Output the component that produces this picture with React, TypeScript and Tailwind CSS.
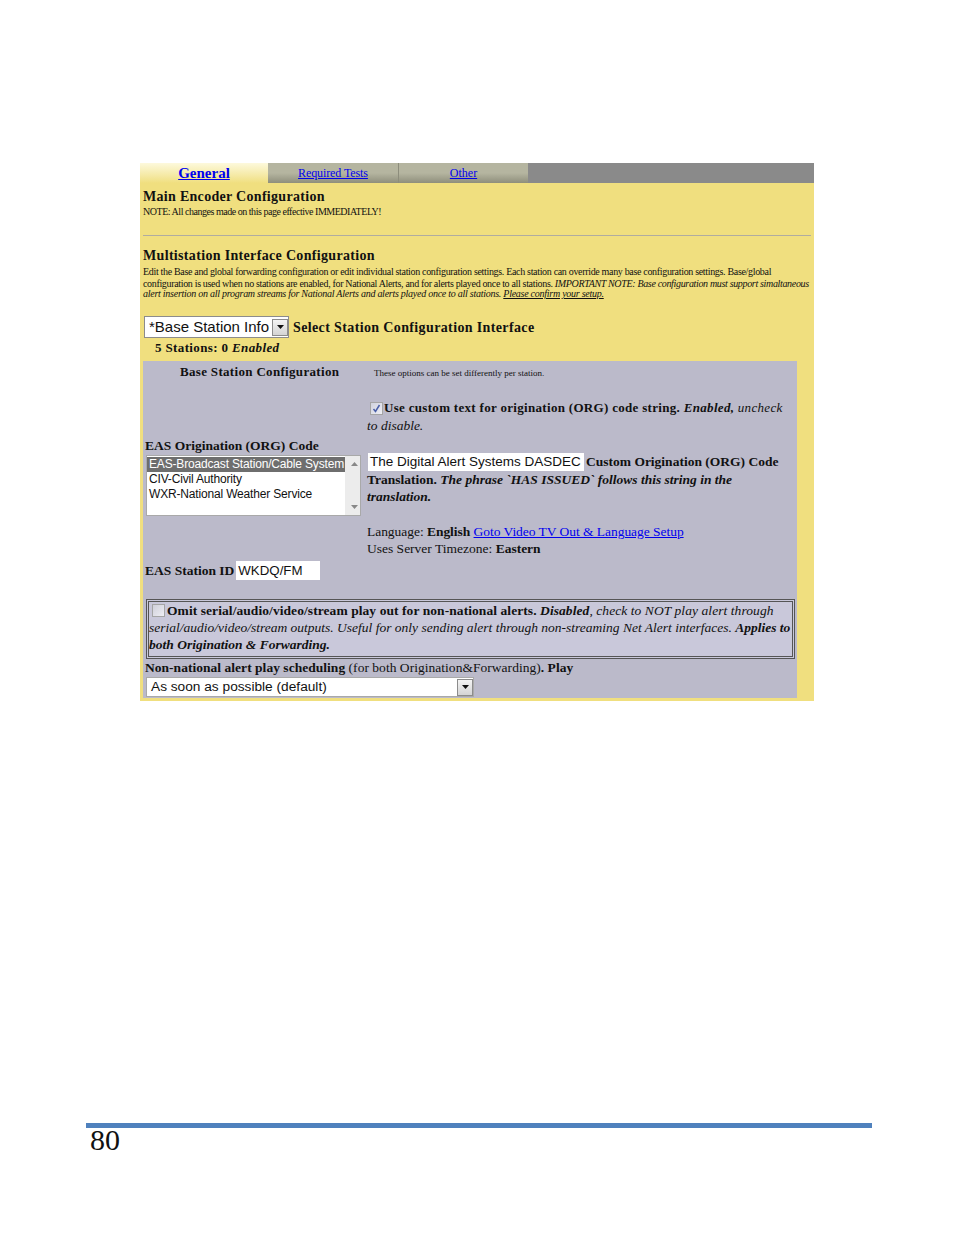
function Arrow() {
  return (
    <span className="flex h-[17px] w-[16px] items-center justify-center border border-[#8c8c8c] bg-gradient-to-b from-[#f4f4f4] to-[#d4d4d4]">
      <svg width="7" height="4" viewBox="0 0 7 4">
        <path d="M0 0h7L3.500 4z" fill="#111" />
      </svg>
    </span>
  );
}

export default function App() {
  return (
    <div className="h-[1235px] w-[954px] overflow-hidden bg-white pt-[163px] font-['Liberation_Serif',serif] text-[#111]">
      <div className="ml-[140px] h-[538px] w-[674px] bg-[#f0df7f]">
        {/* tabs */}
        <div className="flex h-[20px] bg-[#8a8a8a]">
          <div className="w-[128px] bg-gradient-to-b from-[#fdf9dc] to-[#f0df7f] pt-px text-center text-[15px] leading-[18px] font-bold">
            <a className="text-[#0000ee] underline">General</a>
          </div>
          <div className="w-[131px] border-r border-[#8d8d7c] bg-gradient-to-b from-[#b5b5a0] via-[#b5b5a0] to-[#8f8f7c] pt-[2px] text-center text-[12px] leading-[16px] tracking-[-0.1px]">
            <a className="text-[#0000ee] underline">Required Tests</a>
          </div>
          <div className="w-[129px] bg-gradient-to-b from-[#b5b5a0] via-[#b5b5a0] to-[#8f8f7c] pt-[2px] text-center text-[12px] leading-[16px]">
            <a className="text-[#0000ee] underline">Other</a>
          </div>
        </div>

        <div className="pl-[3px]">
          <h1 className="mt-[5px] text-[14px] leading-[18px] font-bold tracking-[0.3px]">Main Encoder Configuration</h1>
          <p className="text-[10px] leading-[12px] tracking-[-0.47px]">NOTE: All changes made on this page effective IMMEDIATELY!</p>
          <div className="mt-[17px] mr-[3px] h-px bg-[#b0aca0]" />
          <h1 className="mt-[11px] text-[14px] leading-[18px] font-bold tracking-[0.33px]">Multistation Interface Configuration</h1>
          <div className="mt-[1px] text-[10px] whitespace-nowrap">
            <p className="leading-[12px] tracking-[-0.325px]">Edit the Base and global forwarding configuration or edit individual station configuration settings. Each station can override many base configuration settings. Base/global</p>
            <p className="leading-[11px] tracking-[-0.335px]">
              configuration is used when no stations are enabled, for National Alerts, and for alerts played once to all stations. <i>IMPORTANT NOTE: Base configuration must support simaltaneous</i>
            </p>
            <p className="leading-[10px] tracking-[-0.26px] italic">
              alert insertion on all program streams for National Alerts and alerts played once to all stations. <u>Please confirm your setup.</u>
            </p>
          </div>

          <div className="mt-[17px] flex items-center">
            <div className="ml-px flex h-[22px] w-[145px] items-center justify-between border border-[#8c8c8c] bg-white pl-[4px] font-['Liberation_Sans',sans-serif] text-[15px] leading-[16px]">
              <span>*Base Station Info</span>
              <Arrow />
            </div>
            <span className="ml-[4px] pt-px text-[14px] leading-[16px] font-bold tracking-[0.37px]">Select Station Configuration Interface</span>
          </div>
          <p className="mt-[2px] pl-[12px] text-[13px] leading-[16px] font-bold tracking-[0.37px]">
            5 Stations: 0 <i>Enabled</i>
          </p>

          {/* grey panel */}
          <div className="mt-[5px] h-[337px] w-[654px] bg-[#bbbaca]">
            <div className="flex h-[21px] items-start">
              <span className="mt-[3px] ml-[37px] w-[194px] text-[13px] leading-[16px] font-bold tracking-[0.32px]">Base Station Configuration</span>
              <span className="mt-[4px] text-[9px] leading-[16px]">These options can be set differently per station.</span>
            </div>

            <div className="flex">
              <div className="w-[224px] pl-[2px]">
                <p className="mt-[56px] text-[13.5px] leading-[16px] font-bold">EAS Origination (ORG) Code</p>
                <div className="mt-[1px] ml-[1px] flex h-[61px] w-[215px] border border-[#a9a9a9] bg-white font-['Liberation_Sans',sans-serif] text-[12px] leading-[15px] tracking-[-0.17px]">
                  <div className="flex-1 pt-px">
                    <div className="bg-[#6e6e6e] pl-[2px] whitespace-nowrap text-white">EAS-Broadcast Station/Cable System</div>
                    <div className="pl-[2px]">CIV-Civil Authority</div>
                    <div className="pl-[2px]">WXR-National Weather Service</div>
                  </div>
                  <div className="flex w-[15px] flex-col items-center justify-between bg-[#ececec] py-[6px] pl-[3px]">
                    <svg width="7" height="4" viewBox="0 0 7 4"><path d="M3.500 0L7 4H0z" fill="#888" /></svg>
                    <svg width="7" height="4" viewBox="0 0 7 4"><path d="M0 0h7L3.500 4z" fill="#888" /></svg>
                  </div>
                </div>
                <div className="mt-[45px] flex items-start">
                  <span className="text-[13.5px] leading-[20px] font-bold">EAS Station ID</span>
                  <div className="ml-[2px] h-[19px] w-[84px] bg-white pl-[2px] font-['Liberation_Sans',sans-serif] text-[13.3px] leading-[20px]">WKDQ/FM</div>
                </div>
              </div>

              <div className="flex-1 text-[13.5px]">
                <div className="mt-[17px] flex items-center pl-[3px] whitespace-nowrap">
                  <span className="flex h-[13px] w-[13px] items-center justify-center border border-[#a5a5a5] bg-gradient-to-br from-[#d0d2de] to-[#eeeef4]">
                    <svg width="9" height="9" viewBox="0 0 9 9"><path d="M1.500 5l2 2.500L7.500 1" fill="none" stroke="#4a5fa8" strokeWidth="1.500" /></svg>
                  </span>
                  <span className="ml-px text-[13px] leading-[18px] tracking-[0.31px]">
                    <b>Use custom text for origination (ORG) code string.</b> <b><i>Enabled,</i></b> <i>uncheck</i>
                  </span>
                </div>
                <p className="leading-[18px] italic">to disable.</p>

                <div className="mt-[18px] flex items-center whitespace-nowrap">
                  <div className="ml-[1px] h-[18px] w-[216px] bg-white pl-[2px] font-['Liberation_Sans',sans-serif] leading-[18px]">The Digital Alert Systems DASDEC</div>
                  <b className="ml-[2px] leading-[18px]">Custom Origination (ORG) Code</b>
                </div>
                <p className="leading-[17px] font-bold whitespace-nowrap">
                  Translation. <i>The phrase `HAS ISSUED` follows this string in the</i>
                </p>
                <p className="leading-[17px] font-bold italic">translation.</p>

                <p className="mt-[18px] leading-[17px] tracking-[-0.04px] whitespace-nowrap">
                  Language: <b>English</b> <a className="text-[#0000ee] underline">Goto Video TV Out &amp; Language Setup</a>
                </p>
                <p className="leading-[17px]">
                  Uses Server Timezone: <b>Eastern</b>
                </p>
              </div>
            </div>

            <div className="mt-[18px] ml-[3px] h-[60px] w-[649px] border border-[#555] bg-[#c9c8da] p-px">
              <div className="h-full border border-[#555] text-[13.5px] leading-[17px] whitespace-nowrap">
                <div className="flex items-center">
                  <span className="ml-[3px] h-[13px] w-[13px] border border-[#a5a5a5] bg-gradient-to-br from-[#d0d0da] to-[#eeeef4]" />
                  <span className="ml-[2px] tracking-[0.07px]">
                    <b>Omit serial/audio/video/stream play out for non-national alerts.</b> <b><i>Disabled</i></b><i>, check to NOT play alert through</i>
                  </span>
                </div>
                <p className="italic">
                  serial/audio/video/stream outputs. Useful for only sending alert through non-streaming Net Alert interfaces. <b>Applies to</b>
                </p>
                <p className="font-bold italic">both Origination &amp; Forwarding.</p>
              </div>
            </div>

            <p className="ml-[2px] text-[13.5px] leading-[17px] tracking-[0.03px] whitespace-nowrap">
              <b>Non-national alert play scheduling</b> (for both Origination&amp;Forwarding)<b>. Play</b>
            </p>
            <div className="mt-px ml-[3px] flex h-[20px] w-[328px] items-center justify-between border border-[#a9a9a9] bg-white pl-[4px] font-['Liberation_Sans',sans-serif] text-[13.7px] leading-[16px]">
              <span>As soon as possible (default)</span>
              <Arrow />
            </div>
          </div>
        </div>
      </div>

      {/* page footer */}
      <div className="mt-[422px] ml-[86px] w-[786px]">
        <div className="h-[5px] bg-[#4f81bd]" />
        <p className="pl-[4px] text-[30px] leading-[24px] text-[#111]">80</p>
      </div>
    </div>
  );
}
